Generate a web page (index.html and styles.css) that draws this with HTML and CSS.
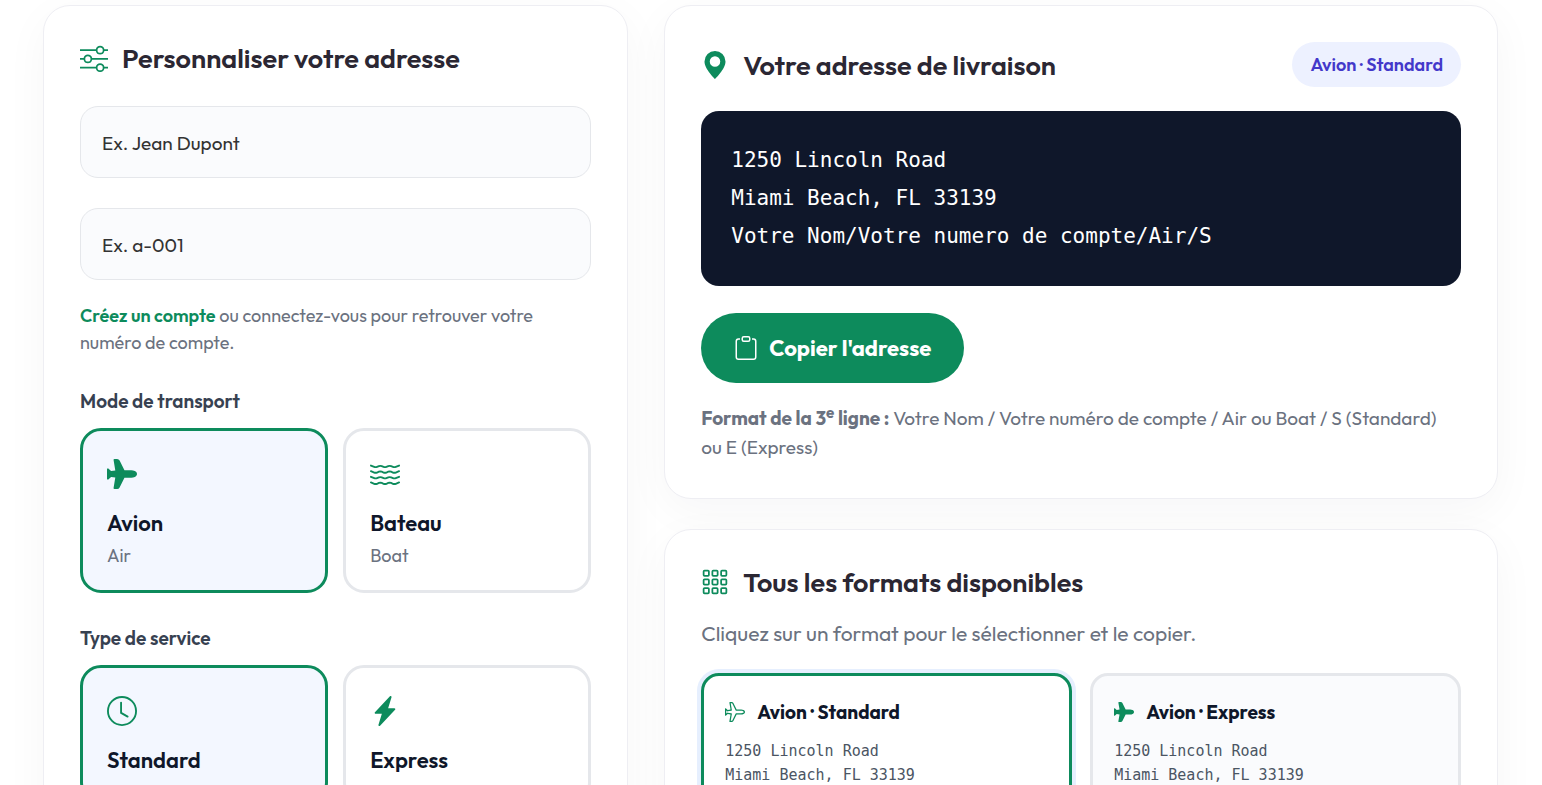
FILE: index.html
```html
<!DOCTYPE html>
<html lang="fr">
<head>
    <meta charset="UTF-8">
    <meta name="viewport" content="width=device-width, initial-scale=1.0">
    <title>Votre adresse de livraison</title>
    <link rel="stylesheet" href="styles.css">
</head>
<body>
    <!-- Shared icons -->
    <svg class="sprite" width="0" height="0" aria-hidden="true">
        <symbol id="plane-fill" viewBox="0 0 16 16">
            <path transform="rotate(90 8 8)" d="M6.428 1.151C6.708.591 7.213 0 8 0s1.292.592 1.572 1.151C9.861 1.73 10 2.431 10 3v3.691l5.17 2.585a1.5 1.5 0 0 1 .83 1.342V12a.5.5 0 0 1-.582.493l-5.507-.918-.375 2.253 1.318 1.318A.5.5 0 0 1 10.5 16h-5a.5.5 0 0 1-.354-.854l1.319-1.318-.376-2.253-5.507.918A.5.5 0 0 1 0 12v-1.382a1.5 1.5 0 0 1 .83-1.342L6 6.691V3c0-.568.14-1.271.428-1.849"/>
        </symbol>
        <symbol id="plane" viewBox="0 0 16 16">
            <path transform="rotate(90 8 8)" d="M6.428 1.151C6.708.591 7.213 0 8 0s1.292.592 1.572 1.151C9.861 1.73 10 2.431 10 3v3.691l5.17 2.585a1.5 1.5 0 0 1 .83 1.342V12a.5.5 0 0 1-.582.493l-5.507-.918-.375 2.253 1.318 1.318A.5.5 0 0 1 10.5 16h-5a.5.5 0 0 1-.354-.854l1.319-1.318-.376-2.253-5.507.918A.5.5 0 0 1 0 12v-1.382a1.5 1.5 0 0 1 .83-1.342L6 6.691V3c0-.568.14-1.271.428-1.849m.894.448C7.111 2.02 7 2.569 7 3v4a.5.5 0 0 1-.276.447l-5.448 2.724a.5.5 0 0 0-.276.447v.792l5.418-.903a.5.5 0 0 1 .575.41l.5 3a.5.5 0 0 1-.14.437L6.708 15h2.586l-.647-.646a.5.5 0 0 1-.14-.436l.5-3a.5.5 0 0 1 .576-.411L15 11.41v-.792a.5.5 0 0 0-.276-.447L9.276 7.447A.5.5 0 0 1 9 7V3c0-.432-.11-.979-.322-1.401C8.458 1.159 8.213 1 8 1s-.458.158-.678.599"/>
        </symbol>
        <symbol id="wave" viewBox="0 0 16 16">
            <path id="wave-line" d="M.036 3.314a.5.5 0 0 1 .65-.278l1.757.703a1.5 1.5 0 0 0 1.114 0l1.014-.406a2.5 2.5 0 0 1 1.857 0l1.015.406a1.5 1.5 0 0 0 1.114 0l1.014-.406a2.5 2.5 0 0 1 1.857 0l1.015.406a1.5 1.5 0 0 0 1.114 0l1.757-.703a.5.5 0 1 1 .372.928l-1.758.703a2.5 2.5 0 0 1-1.857 0l-1.014-.406a1.5 1.5 0 0 0-1.114 0l-1.015.406a2.5 2.5 0 0 1-1.857 0l-1.014-.406a1.5 1.5 0 0 0-1.114 0l-1.015.406a2.5 2.5 0 0 1-1.857 0L.314 3.964a.5.5 0 0 1-.278-.65"/>
            <use href="#wave-line" y="3"/>
            <use href="#wave-line" y="6"/>
            <use href="#wave-line" y="9"/>
        </symbol>
    </svg>

    <main class="layout">
        <section class="card form-card">
            <h2 class="card-title">
                <svg class="icon" viewBox="0 0 16 16" aria-hidden="true"><path fill-rule="evenodd" d="M11.5 2a1.5 1.5 0 1 0 0 3 1.5 1.5 0 0 0 0-3M9.05 3a2.5 2.5 0 0 1 4.9 0H16v1h-2.05a2.5 2.5 0 0 1-4.9 0H0V3zM4.5 7a1.5 1.5 0 1 0 0 3 1.5 1.5 0 0 0 0-3M2.05 8a2.5 2.5 0 0 1 4.9 0H16v1H6.95a2.5 2.5 0 0 1-4.9 0H0V8zm9.45 4a1.5 1.5 0 1 0 0 3 1.5 1.5 0 0 0 0-3m-2.45 1a2.5 2.5 0 0 1 4.9 0H16v1h-2.05a2.5 2.5 0 0 1-4.9 0H0v-1z"/></svg>
                Personnaliser votre adresse
            </h2>
            <form>
                <input class="field" type="text" id="fullName" placeholder="Ex. Jean Dupont" aria-label="Nom complet">
                <input class="field" type="text" id="accountNumber" placeholder="Ex. a-001" aria-label="Numéro de compte">
                <p class="help"><a href="#">Créez un compte</a> ou connectez-vous pour retrouver votre numéro de compte.</p>

                <h3 class="group-label" id="modeLabel">Mode de transport</h3>
                <div class="options" role="group" aria-labelledby="modeLabel">
                    <button type="button" class="option active" aria-pressed="true">
                        <svg class="option-icon" aria-hidden="true"><use href="#plane-fill"/></svg>
                        <span class="option-name">Avion</span>
                        <span class="option-note">Air</span>
                    </button>
                    <button type="button" class="option" aria-pressed="false">
                        <svg class="option-icon" aria-hidden="true"><use href="#wave"/></svg>
                        <span class="option-name">Bateau</span>
                        <span class="option-note">Boat</span>
                    </button>
                </div>

                <h3 class="group-label" id="serviceLabel">Type de service</h3>
                <div class="options" role="group" aria-labelledby="serviceLabel">
                    <button type="button" class="option active" aria-pressed="true">
                        <svg class="option-icon" viewBox="0 0 16 16" aria-hidden="true"><path d="M8 3.5a.5.5 0 0 0-1 0V9a.5.5 0 0 0 .252.434l3.5 2a.5.5 0 0 0 .496-.868L8 8.71z"/><path d="M8 16A8 8 0 1 0 8 0a8 8 0 0 0 0 16m7-8A7 7 0 1 1 1 8a7 7 0 0 1 14 0"/></svg>
                        <span class="option-name">Standard</span>
                    </button>
                    <button type="button" class="option" aria-pressed="false">
                        <svg class="option-icon" viewBox="0 0 16 16" aria-hidden="true"><path d="M11.251.068a.5.5 0 0 1 .227.58L9.677 6.5H13a.5.5 0 0 1 .364.843l-8 8.5a.5.5 0 0 1-.842-.49L6.323 9.5H3a.5.5 0 0 1-.364-.843l8-8.5a.5.5 0 0 1 .615-.09z"/></svg>
                        <span class="option-name">Express</span>
                    </button>
                </div>
            </form>
        </section>

        <div class="results">
            <section class="card">
                <div class="card-head">
                    <h2 class="card-title">
                        <svg class="icon" viewBox="0 0 16 16" aria-hidden="true"><path d="M8 16s6-5.686 6-10A6 6 0 0 0 2 6c0 4.314 6 10 6 10m0-7a3 3 0 1 1 0-6 3 3 0 0 1 0 6"/></svg>
                        Votre adresse de livraison
                    </h2>
                    <span class="badge">Avion · Standard</span>
                </div>
                <pre class="address" id="address">1250 Lincoln Road
Miami Beach, FL 33139
Votre Nom/Votre numero de compte/Air/S</pre>
                <button type="button" class="copy-button" id="copyBtn">
                    <svg class="copy-icon" viewBox="0 0 16 16" aria-hidden="true"><path d="M4 1.5H3a2 2 0 0 0-2 2V14a2 2 0 0 0 2 2h10a2 2 0 0 0 2-2V3.5a2 2 0 0 0-2-2h-1v1h1a1 1 0 0 1 1 1V14a1 1 0 0 1-1 1H3a1 1 0 0 1-1-1V3.5a1 1 0 0 1 1-1h1z"/><path d="M9.5 1a.5.5 0 0 1 .5.5v1a.5.5 0 0 1-.5.5h-3a.5.5 0 0 1-.5-.5v-1a.5.5 0 0 1 .5-.5zm-3-1A1.5 1.5 0 0 0 5 1.5v1A1.5 1.5 0 0 0 6.5 4h3A1.5 1.5 0 0 0 11 2.5v-1A1.5 1.5 0 0 0 9.5 0z"/></svg>
                    Copier l'adresse
                </button>
                <p class="format-note"><strong>Format de la 3<sup>e</sup> ligne :</strong> Votre Nom / Votre numéro de compte / Air ou Boat / S (Standard) ou E (Express)</p>
            </section>

            <section class="card">
                <h2 class="card-title">
                    <svg class="icon icon-grid" viewBox="0 0 16 16" aria-hidden="true">
                        <rect x="1.5" y="1.5" width="3" height="3" rx=".5"/><rect x="6.5" y="1.5" width="3" height="3" rx=".5"/><rect x="11.5" y="1.5" width="3" height="3" rx=".5"/>
                        <rect x="1.5" y="6.5" width="3" height="3" rx=".5"/><rect x="6.5" y="6.5" width="3" height="3" rx=".5"/><rect x="11.5" y="6.5" width="3" height="3" rx=".5"/>
                        <rect x="1.5" y="11.5" width="3" height="3" rx=".5"/><rect x="6.5" y="11.5" width="3" height="3" rx=".5"/><rect x="11.5" y="11.5" width="3" height="3" rx=".5"/>
                    </svg>
                    Tous les formats disponibles
                </h2>
                <p class="intro">Cliquez sur un format pour le sélectionner et le copier.</p>
                <div class="formats">
                    <button type="button" class="format active">
                        <span class="format-name"><svg class="format-icon" aria-hidden="true"><use href="#plane"/></svg>Avion · Standard</span>
                        <span class="format-address">1250 Lincoln Road
Miami Beach, FL 33139</span>
                    </button>
                    <button type="button" class="format">
                        <span class="format-name"><svg class="format-icon" aria-hidden="true"><use href="#plane-fill"/></svg>Avion · Express</span>
                        <span class="format-address">1250 Lincoln Road
Miami Beach, FL 33139</span>
                    </button>
                </div>
            </section>
        </div>
    </main>

    <script>
        // Select one option in each group
        document.querySelectorAll('.options').forEach(function(group) {
            group.addEventListener('click', function(event) {
                const option = event.target.closest('.option');
                if (!option) return;
                group.querySelectorAll('.option').forEach(function(item) {
                    item.classList.toggle('active', item === option);
                    item.setAttribute('aria-pressed', item === option);
                });
            });
        });

        // Copy the address
        document.getElementById('copyBtn').addEventListener('click', function() {
            navigator.clipboard.writeText(document.getElementById('address').textContent);
        });
    </script>
</body>
</html>
```
FILE: styles.css
```css
* {
    box-sizing: border-box;
}
body {
    margin: 0;
    padding: 5px 44px 30px 43px;
    background-color: #fff;
    color: #2b2733;
    font-family: Outfit, Lato, sans-serif;
    font-size: 20px;
}
h2, h3, p, pre {
    margin: 0;
}
button, input {
    font-family: inherit;
}
button {
    cursor: pointer;
}
svg {
    fill: currentColor;
}
.sprite {
    display: block;
}

/* Two columns, 5/12 and 7/12 */
.layout {
    display: grid;
    grid-template-columns: repeat(12, minmax(0, 1fr));
    column-gap: 36px;
}
.form-card {
    grid-column: span 5;
}
.results {
    grid-column: span 7;
    display: flex;
    flex-direction: column;
    gap: 30px;
}
.card {
    padding: 36px;
    background-color: #fff;
    border: 1px solid #eeeef3;
    border-radius: 27px;
    box-shadow: 0 12px 45px rgba(15, 23, 42, 0.04);
}
.card-head {
    display: flex;
    justify-content: space-between;
    align-items: center;
    margin-bottom: 24px;
}
.card-title {
    display: flex;
    align-items: center;
    gap: 14px;
    font-size: 27px;
    font-weight: 600;
    line-height: 32px;
}
.icon {
    width: 28px;
    height: 28px;
    flex-shrink: 0;
    color: #0d8b5c;
}
.icon-grid {
    fill: none;
    stroke: currentColor;
}

/* Form */
.form-card .card-title {
    margin-bottom: 32px;
}
.field {
    display: block;
    width: 100%;
    height: 72px;
    margin-bottom: 30px;
    padding: 1px 21px 0;
    font-size: 19px;
    color: #333;
    background-color: #fafbfd;
    border: 1px solid #e5e7eb;
    border-radius: 18px;
}
.field::placeholder {
    color: #333;
    opacity: 1;
}
.help {
    margin-top: -8px;
    font-size: 18px;
    line-height: 27px;
    color: #6b7280;
}
.help a {
    color: #0d8b5c;
    font-weight: 600;
    text-decoration: none;
}
.group-label {
    margin: 32px 0 13px;
    font-size: 19px;
    font-weight: 600;
    line-height: 27px;
    color: #374151;
}
.options {
    display: grid;
    grid-template-columns: 1fr 1fr;
    gap: 15px;
}
.option {
    display: flex;
    flex-direction: column;
    align-items: flex-start;
    padding: 28px 24px 21px;
    background-color: #fff;
    border: 3px solid #e5e7eb;
    border-radius: 21px;
}
.option.active {
    background-color: #f3f7ff;
    border-color: #0d8b5c;
}
.option-icon {
    width: 30px;
    height: 30px;
    margin-bottom: 20px;
    color: #0d8b5c;
}
.option-name {
    margin-bottom: 6px;
    font-size: 22px;
    font-weight: 600;
    line-height: 28px;
    color: #0f172a;
}
.option-note {
    font-size: 18px;
    line-height: 26px;
    color: #6b7280;
}

/* Address */
.badge {
    padding: 9px 18px;
    font-size: 18px;
    font-weight: 600;
    line-height: 27px;
    color: #4338ca;
    background-color: #edf1ff;
    border-radius: 30px;
}
.address {
    margin-bottom: 27px;
    padding: 30px 30px 31px;
    overflow-x: auto;
    font-family: Consolas, "DejaVu Sans Mono", monospace;
    font-size: 21px;
    line-height: 38px;
    color: #fff;
    background-color: #0f172a;
    border-radius: 18px;
}
.copy-button {
    display: inline-flex;
    align-items: center;
    gap: 11px;
    padding: 20px 33px;
    font-size: 22px;
    font-weight: 700;
    line-height: 30px;
    color: #fff;
    background-color: #0d8b5c;
    border: none;
    border-radius: 35px;
}
.copy-icon {
    width: 24px;
    height: 24px;
}
.format-note {
    margin-top: 21px;
    padding-right: 10px;
    font-size: 19px;
    line-height: 29px;
    color: #6b7280;
}
.format-note sup {
    font-size: 15px;
    line-height: 0;
}

/* Formats */
.intro {
    margin: 19px 0 24px;
    font-size: 21px;
    line-height: 32px;
    color: #6b7280;
}
.formats {
    display: grid;
    grid-template-columns: 1fr 1fr;
    gap: 18px;
}
.format {
    padding: 21px 21px 46px;
    text-align: left;
    background-color: #fafbfd;
    border: 3px solid #e5e7eb;
    border-radius: 18px;
}
.format.active {
    background-color: #fff;
    border-color: #0d8b5c;
    box-shadow: 0 0 0 4px #e6effe;
}
.format-name {
    display: flex;
    align-items: center;
    gap: 12px;
    margin-bottom: 12px;
    font-size: 19px;
    font-weight: 700;
    line-height: 30px;
    color: #0f172a;
}
.format-icon {
    width: 20px;
    height: 20px;
    color: #0d8b5c;
}
.format-address {
    display: block;
    font-family: Consolas, "DejaVu Sans Mono", monospace;
    font-size: 15px;
    line-height: 24px;
    white-space: pre-wrap;
    color: #4b5563;
}
```
